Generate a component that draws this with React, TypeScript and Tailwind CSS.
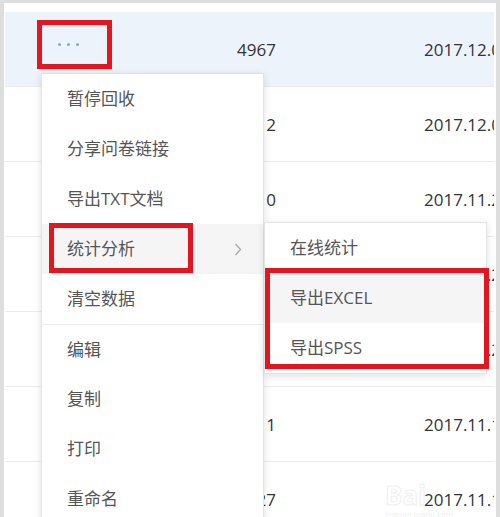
import React from "react";

const font = { fontFamily: '"Open Sans", "Noto Sans CJK SC", sans-serif' };

const rows = [
  { num: "4967", date: "2017.12.05 10:21" },
  { num: "3412", date: "2017.12.01 09:12" },
  { num: "1210", date: "2017.11.28 14:30" },
  { num: "2315", date: "2017.11.25 16:02" },
  { num: "1876", date: "2017.11.21 11:45" },
  { num: "3011", date: "2017.11.18 08:33" },
  { num: "1527", date: "2017.11.15 17:20" },
];

const mainItems = [
  "暂停回收",
  "分享问卷链接",
  "导出TXT文档",
  "统计分析",
  "清空数据",
  "编辑",
  "复制",
  "打印",
  "重命名",
];

export default function App() {
  return (
    <div
      className="relative w-[500px] h-[517px] overflow-hidden bg-[#dedede] pt-[3px] pl-[4px] pr-[4px]"
      style={font}
    >
      <div className="h-full bg-white pt-[9px] pl-[1px] pr-[2px]">
        {rows.map((r, i) => (
          <div
            key={i}
            className={
              "flex items-center h-[75px] border-b border-[#ececec] " +
              (i === 0 ? "bg-[#edf3fa]" : "")
            }
          >
            <div className="w-[232px] shrink-0 flex items-center">
              {i === 0 && (
                <div className="ml-[53px] -mt-[9px] flex gap-[6px]">
                  <span className="w-[3px] h-[3px] rounded-full bg-[#7fa7d6]" />
                  <span className="w-[3px] h-[3px] rounded-full bg-[#7fa7d6]" />
                  <span className="w-[3px] h-[3px] rounded-full bg-[#7fa7d6]" />
                </div>
              )}
            </div>
            <div className="w-[187px] shrink-0 text-[17px] leading-none text-[#333]">
              {r.num}
            </div>
            <div className="flex-1 overflow-hidden whitespace-nowrap text-[17px] leading-none text-[#333]">
              {r.date}
            </div>
          </div>
        ))}
      </div>

      {/* watermark */}
      <div className="absolute left-[385px] top-[482px] select-none pointer-events-none">
        <div className="text-[26px] leading-none font-bold text-transparent [-webkit-text-stroke:1px_#f0f0f0]">
          Bai
        </div>
        <div className="text-[8px] leading-none text-[#f0f0f0] mt-[2px]">jingyan.baidu.com</div>
      </div>

      {/* main menu */}
      <div className="absolute left-[41px] top-[73px] w-[223px] bg-white border border-[#e3e3e3] shadow-[0_2px_8px_rgba(0,0,0,0.12)]">
        {mainItems.map((t, i) => (
          <div
            key={t}
            className={
              "relative flex items-center h-[50px] pl-[25px] text-[17px] text-[#555] " +
              (i === 3 ? "bg-[#f5f5f5] " : "") +
              (i === 5 ? "border-t border-[#eeeeee]" : "")
            }
          >
            {t}
            {i === 3 && (
              <svg
                className="absolute left-[192px] top-[19px]"
                width="8"
                height="13"
                viewBox="0 0 8 13"
                fill="none"
              >
                <polyline points="1.5,1 6.5,6.5 1.5,12" stroke="#a8a8a8" strokeWidth="1.3" />
              </svg>
            )}
          </div>
        ))}
      </div>

      {/* submenu */}
      <div className="absolute left-[264px] top-[222px] w-[223px] bg-white border border-[#e3e3e3] shadow-[0_2px_8px_rgba(0,0,0,0.12)]">
        <div className="flex items-center h-[50px] pl-[25px] text-[17px] text-[#555]">在线统计</div>
        <div className="flex items-center h-[50px] pl-[25px] text-[17px] text-[#555] bg-[#f5f5f5]">导出EXCEL</div>
        <div className="flex items-center h-[50px] pl-[25px] text-[17px] text-[#555]">导出SPSS</div>
      </div>

      {/* red annotation boxes */}
      <div className="absolute left-[37px] top-[20px] w-[75px] h-[49px] border-[5px] border-[#e3151f]" />
      <div className="absolute left-[49px] top-[223px] w-[144px] h-[50px] border-[5px] border-[#e3151f]" />
      <div className="absolute left-[265px] top-[268px] w-[224px] h-[101px] border-[5px] border-[#e3151f]" />
    </div>
  );
}
